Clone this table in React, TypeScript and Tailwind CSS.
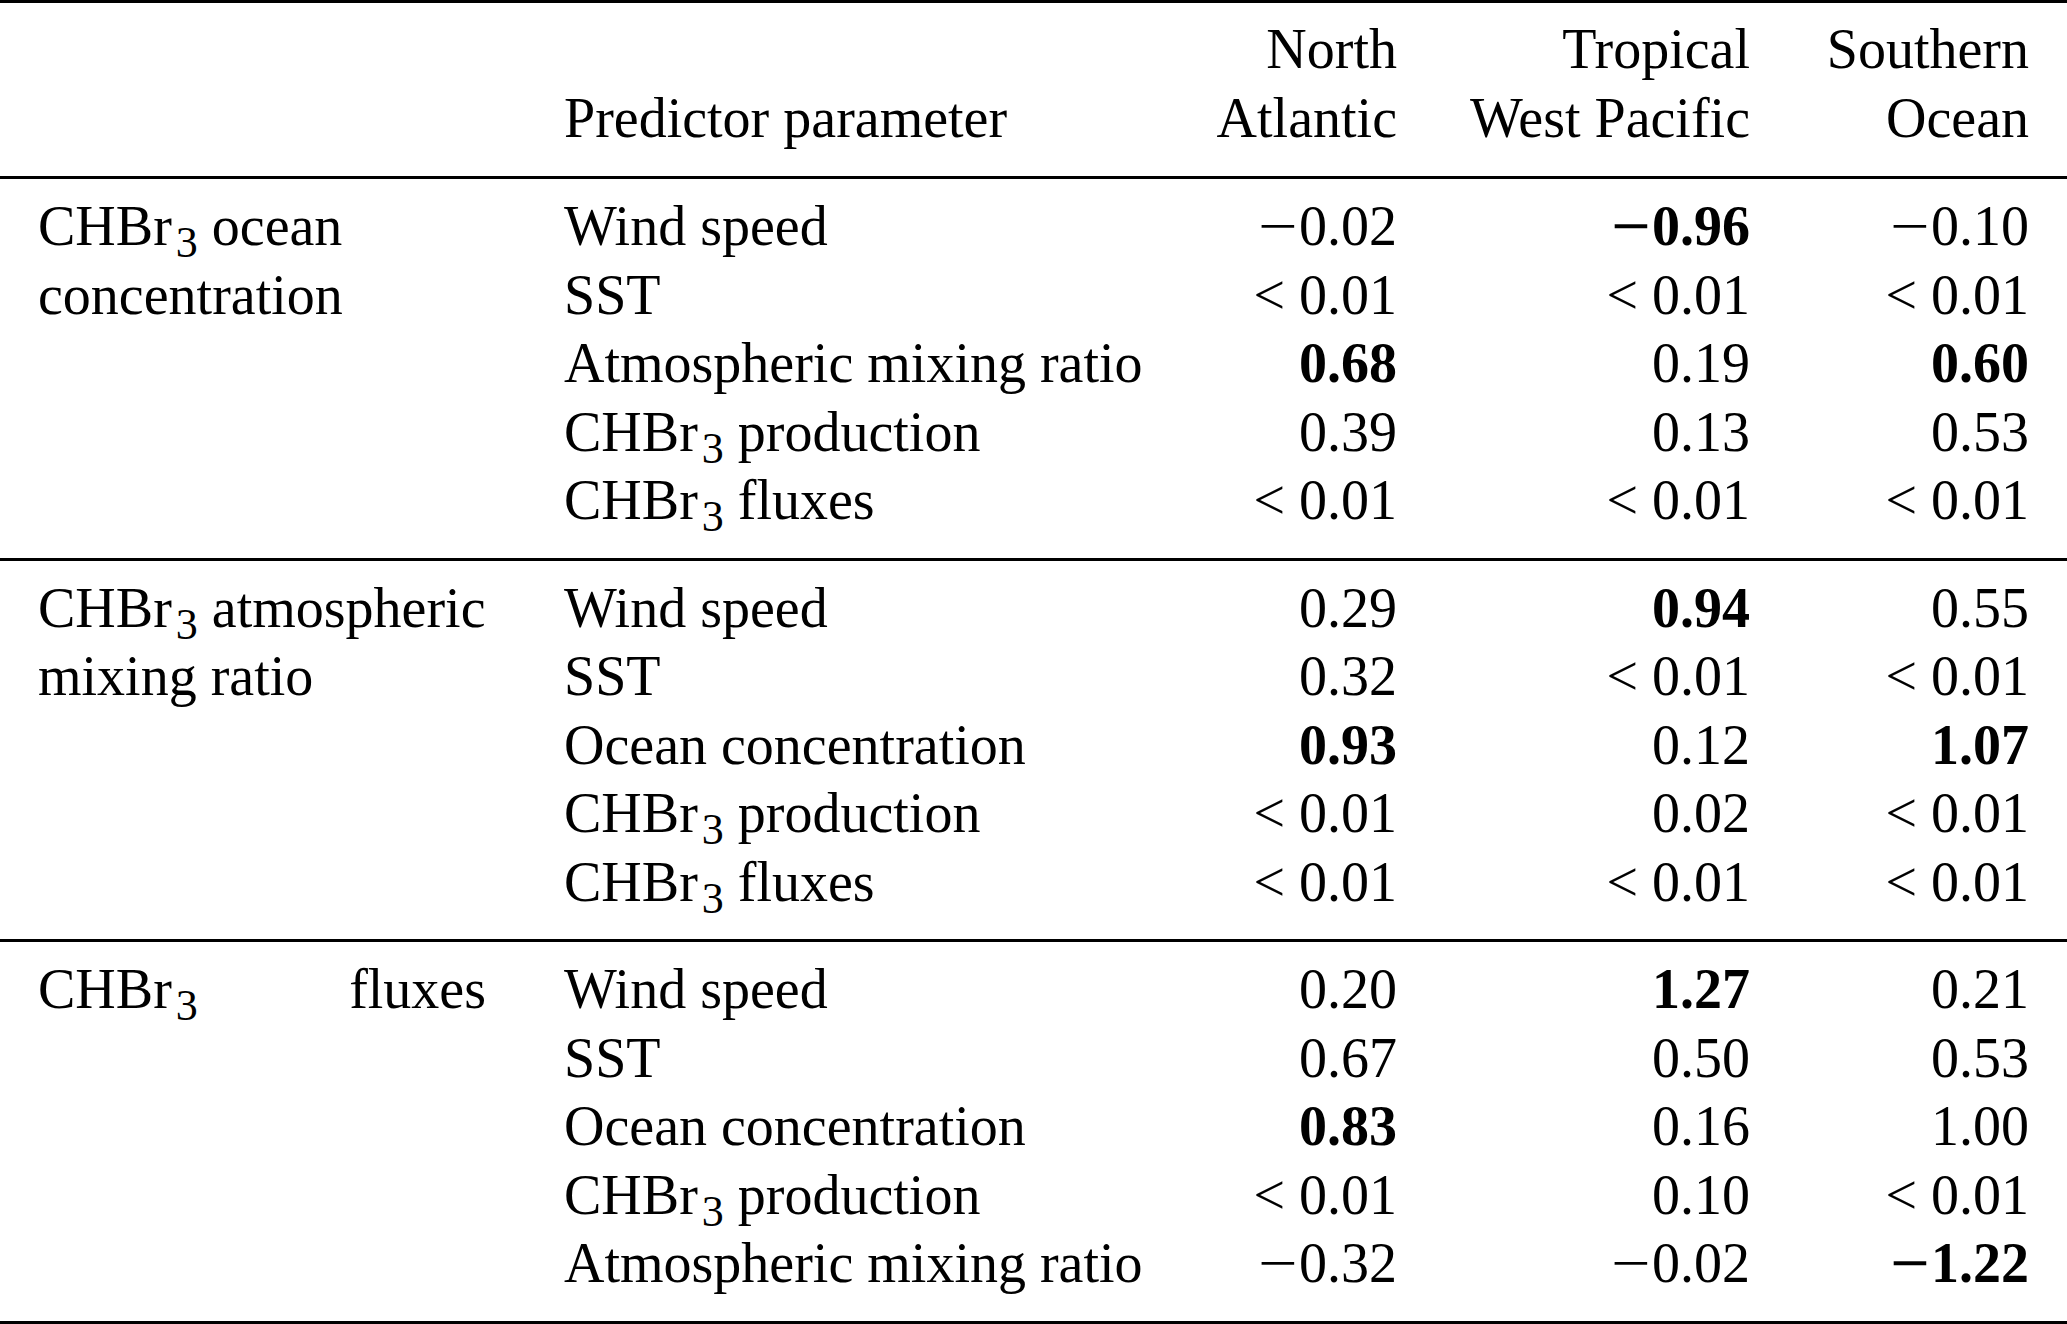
import React from "react";

const MINUS = "\u2212";

function Chem({ rest }: { rest: string }) {
  return (
    <>
      CHBr
      <span className="inline-block w-[26px] pl-[4px] text-[44px] leading-[0] align-[-12px]">3</span>
      {rest}
    </>
  );
}

function Name({ text }: { text: string }) {
  if (text.startsWith("CHBr3")) return <Chem rest={text.slice(5)} />;
  return <>{text}</>;
}

function Val({ v }: { v: string }) {
  const bold = v.startsWith("*");
  let s = bold ? v.slice(1) : v;
  const neg = s.startsWith(MINUS);
  if (neg) s = s.slice(1);
  return (
    <span className={bold ? "font-bold" : ""}>
      {neg && (
        <span className="inline-block w-[41px] text-left">
          <span className="inline-block origin-left scale-x-[1.25]">{MINUS}</span>
        </span>
      )}
      {s}
    </span>
  );
}

type Group = {
  label: React.ReactNode[];
  rows: string[][];
};

const groups: Group[] = [
  {
    label: [<Chem key="a" rest=" ocean" />, "concentration"],
    rows: [
      ["Wind speed", "\u22120.02", "*\u22120.96", "\u22120.10"],
      ["SST", "< 0.01", "< 0.01", "< 0.01"],
      ["Atmospheric mixing ratio", "*0.68", "0.19", "*0.60"],
      ["CHBr3 production", "0.39", "0.13", "0.53"],
      ["CHBr3 fluxes", "< 0.01", "< 0.01", "< 0.01"],
    ],
  },
  {
    label: [<Chem key="b" rest=" atmospheric" />, "mixing ratio"],
    rows: [
      ["Wind speed", "0.29", "*0.94", "0.55"],
      ["SST", "0.32", "< 0.01", "< 0.01"],
      ["Ocean concentration", "*0.93", "0.12", "*1.07"],
      ["CHBr3 production", "< 0.01", "0.02", "< 0.01"],
      ["CHBr3 fluxes", "< 0.01", "< 0.01", "< 0.01"],
    ],
  },
  {
    label: [
      <span key="c" className="flex justify-between">
        <span>
          <Chem rest="" />
        </span>
        <span>fluxes</span>
      </span>,
    ],
    rows: [
      ["Wind speed", "0.20", "*1.27", "0.21"],
      ["SST", "0.67", "0.50", "0.53"],
      ["Ocean concentration", "*0.83", "0.16", "1.00"],
      ["CHBr3 production", "< 0.01", "0.10", "< 0.01"],
      ["Atmospheric mixing ratio", "\u22120.32", "\u22120.02", "*\u22121.22"],
    ],
  },
];

const cols = "grid grid-cols-[448px_711px_200px_353px_279px] auto-rows-[68.5px]";

export default function App() {
  return (
    <div className="w-[2067px] h-[1324px] bg-white text-black font-['Liberation_Serif',_'Times_New_Roman',_serif] text-[56px] leading-[68.5px] overflow-hidden">
      <div className="h-[3px] bg-black" />
      <div className={`${cols} px-[38px] pt-[12px] pb-[24px]`}>
        <div />
        <div />
        <div className="text-right">North</div>
        <div className="text-right">Tropical</div>
        <div className="text-right">Southern</div>
        <div />
        <div className="pl-[78px] whitespace-nowrap">Predictor parameter</div>
        <div className="text-right whitespace-nowrap">Atlantic</div>
        <div className="text-right whitespace-nowrap">West Pacific</div>
        <div className="text-right whitespace-nowrap">Ocean</div>
      </div>
      <div className="h-[3px] bg-black" />
      {groups.map((g, gi) => (
        <div key={gi}>
          <div className={`${cols} px-[38px] pt-[13px] pb-[23px]`}>
            <div className="row-span-5">
              {g.label.map((l, i) => (
                <div key={i} className="h-[68.5px] whitespace-nowrap">
                  {l}
                </div>
              ))}
            </div>
            {g.rows.map((r, ri) => (
              <React.Fragment key={ri}>
                <div className="pl-[78px] whitespace-nowrap">
                  <Name text={r[0]} />
                </div>
                <div className="text-right whitespace-nowrap">
                  <Val v={r[1]} />
                </div>
                <div className="text-right whitespace-nowrap">
                  <Val v={r[2]} />
                </div>
                <div className="text-right whitespace-nowrap">
                  <Val v={r[3]} />
                </div>
              </React.Fragment>
            ))}
          </div>
          <div className="h-[3px] bg-black" />
        </div>
      ))}
    </div>
  );
}
